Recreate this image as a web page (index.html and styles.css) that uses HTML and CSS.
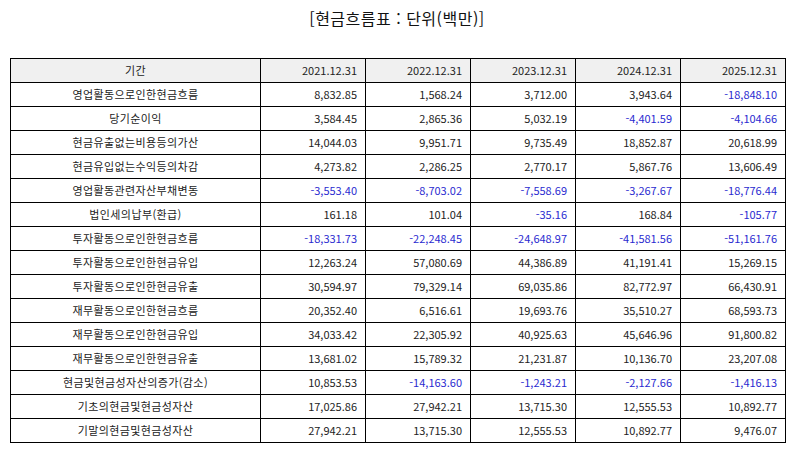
FILE: index.html
```html
<!DOCTYPE html>
<html lang="ko">
<head>
<meta charset="utf-8">
<link rel="stylesheet" href="styles.css">
</head>
<body>
<div class="page">
  <h1 class="title">[현금흐름표 : 단위(백만)]</h1>
  <table class="cf">
    <colgroup>
      <col class="c-label"><col class="c-num"><col class="c-num"><col class="c-num"><col class="c-num"><col class="c-num">
    </colgroup>
    <thead>
      <tr><th class="lbl">기간</th><th>2021.12.31</th><th>2022.12.31</th><th>2023.12.31</th><th>2024.12.31</th><th>2025.12.31</th></tr>
    </thead>
    <tbody>
      <tr><td class="lbl">영업활동으로인한현금흐름</td><td>8,832.85</td><td>1,568.24</td><td>3,712.00</td><td>3,943.64</td><td class="neg">-18,848.10</td></tr>
      <tr><td class="lbl">당기순이익</td><td>3,584.45</td><td>2,865.36</td><td>5,032.19</td><td class="neg">-4,401.59</td><td class="neg">-4,104.66</td></tr>
      <tr><td class="lbl">현금유출없는비용등의가산</td><td>14,044.03</td><td>9,951.71</td><td>9,735.49</td><td>18,852.87</td><td>20,618.99</td></tr>
      <tr><td class="lbl">현금유입없는수익등의차감</td><td>4,273.82</td><td>2,286.25</td><td>2,770.17</td><td>5,867.76</td><td>13,606.49</td></tr>
      <tr><td class="lbl">영업활동관련자산부채변동</td><td class="neg">-3,553.40</td><td class="neg">-8,703.02</td><td class="neg">-7,558.69</td><td class="neg">-3,267.67</td><td class="neg">-18,776.44</td></tr>
      <tr><td class="lbl">법인세의납부(환급)</td><td>161.18</td><td>101.04</td><td class="neg">-35.16</td><td>168.84</td><td class="neg">-105.77</td></tr>
      <tr><td class="lbl">투자활동으로인한현금흐름</td><td class="neg">-18,331.73</td><td class="neg">-22,248.45</td><td class="neg">-24,648.97</td><td class="neg">-41,581.56</td><td class="neg">-51,161.76</td></tr>
      <tr><td class="lbl">투자활동으로인한현금유입</td><td>12,263.24</td><td>57,080.69</td><td>44,386.89</td><td>41,191.41</td><td>15,269.15</td></tr>
      <tr><td class="lbl">투자활동으로인한현금유출</td><td>30,594.97</td><td>79,329.14</td><td>69,035.86</td><td>82,772.97</td><td>66,430.91</td></tr>
      <tr><td class="lbl">재무활동으로인한현금흐름</td><td>20,352.40</td><td>6,516.61</td><td>19,693.76</td><td>35,510.27</td><td>68,593.73</td></tr>
      <tr><td class="lbl">재무활동으로인한현금유입</td><td>34,033.42</td><td>22,305.92</td><td>40,925.63</td><td>45,646.96</td><td>91,800.82</td></tr>
      <tr><td class="lbl">재무활동으로인한현금유출</td><td>13,681.02</td><td>15,789.32</td><td>21,231.87</td><td>10,136.70</td><td>23,207.08</td></tr>
      <tr><td class="lbl">현금및현금성자산의증가(감소)</td><td>10,853.53</td><td class="neg">-14,163.60</td><td class="neg">-1,243.21</td><td class="neg">-2,127.66</td><td class="neg">-1,416.13</td></tr>
      <tr><td class="lbl">기초의현금및현금성자산</td><td>17,025.86</td><td>27,942.21</td><td>13,715.30</td><td>12,555.53</td><td>10,892.77</td></tr>
      <tr><td class="lbl">기말의현금및현금성자산</td><td>27,942.21</td><td>13,715.30</td><td>12,555.53</td><td>10,892.77</td><td>9,476.07</td></tr>
    </tbody>
  </table>
</div>
</body>
</html>
```

FILE: styles.css
```css
html, body {
  margin: 0;
  padding: 0;
  background: #ffffff;
}
body {
  font-family: "Noto Sans CJK KR", "Noto Sans", sans-serif;
  color: #1a1a1a;
}
.page {
  width: 794px;
  padding-top: 6px;
}
.title {
  margin: 0;
  height: 24px;
  line-height: 24px;
  font-size: 16px;
  letter-spacing: 0.5px;
  font-weight: 400;
  text-align: center;
  color: #111111;
}
.cf {
  margin: 28px 0 0 10px;
  width: 776px;
  table-layout: fixed;
  border-collapse: collapse;
  font-size: 11px;
}
.c-label { width: 250px; }
.c-num { width: 105px; }
.cf th, .cf td {
  border: 1px solid #000000;
  height: 23px;
  padding: 0 8px 0 4px;
  line-height: 23px;
  text-align: right;
  font-weight: 400;
  white-space: nowrap;
  color: #222222;
}
.cf thead th {
  background: #f0f0f0;
}
.cf .lbl {
  text-align: center;
  padding: 0 4px;
  letter-spacing: 0.4px;
}
.cf td.neg {
  color: #2a2ad0;
}
```
